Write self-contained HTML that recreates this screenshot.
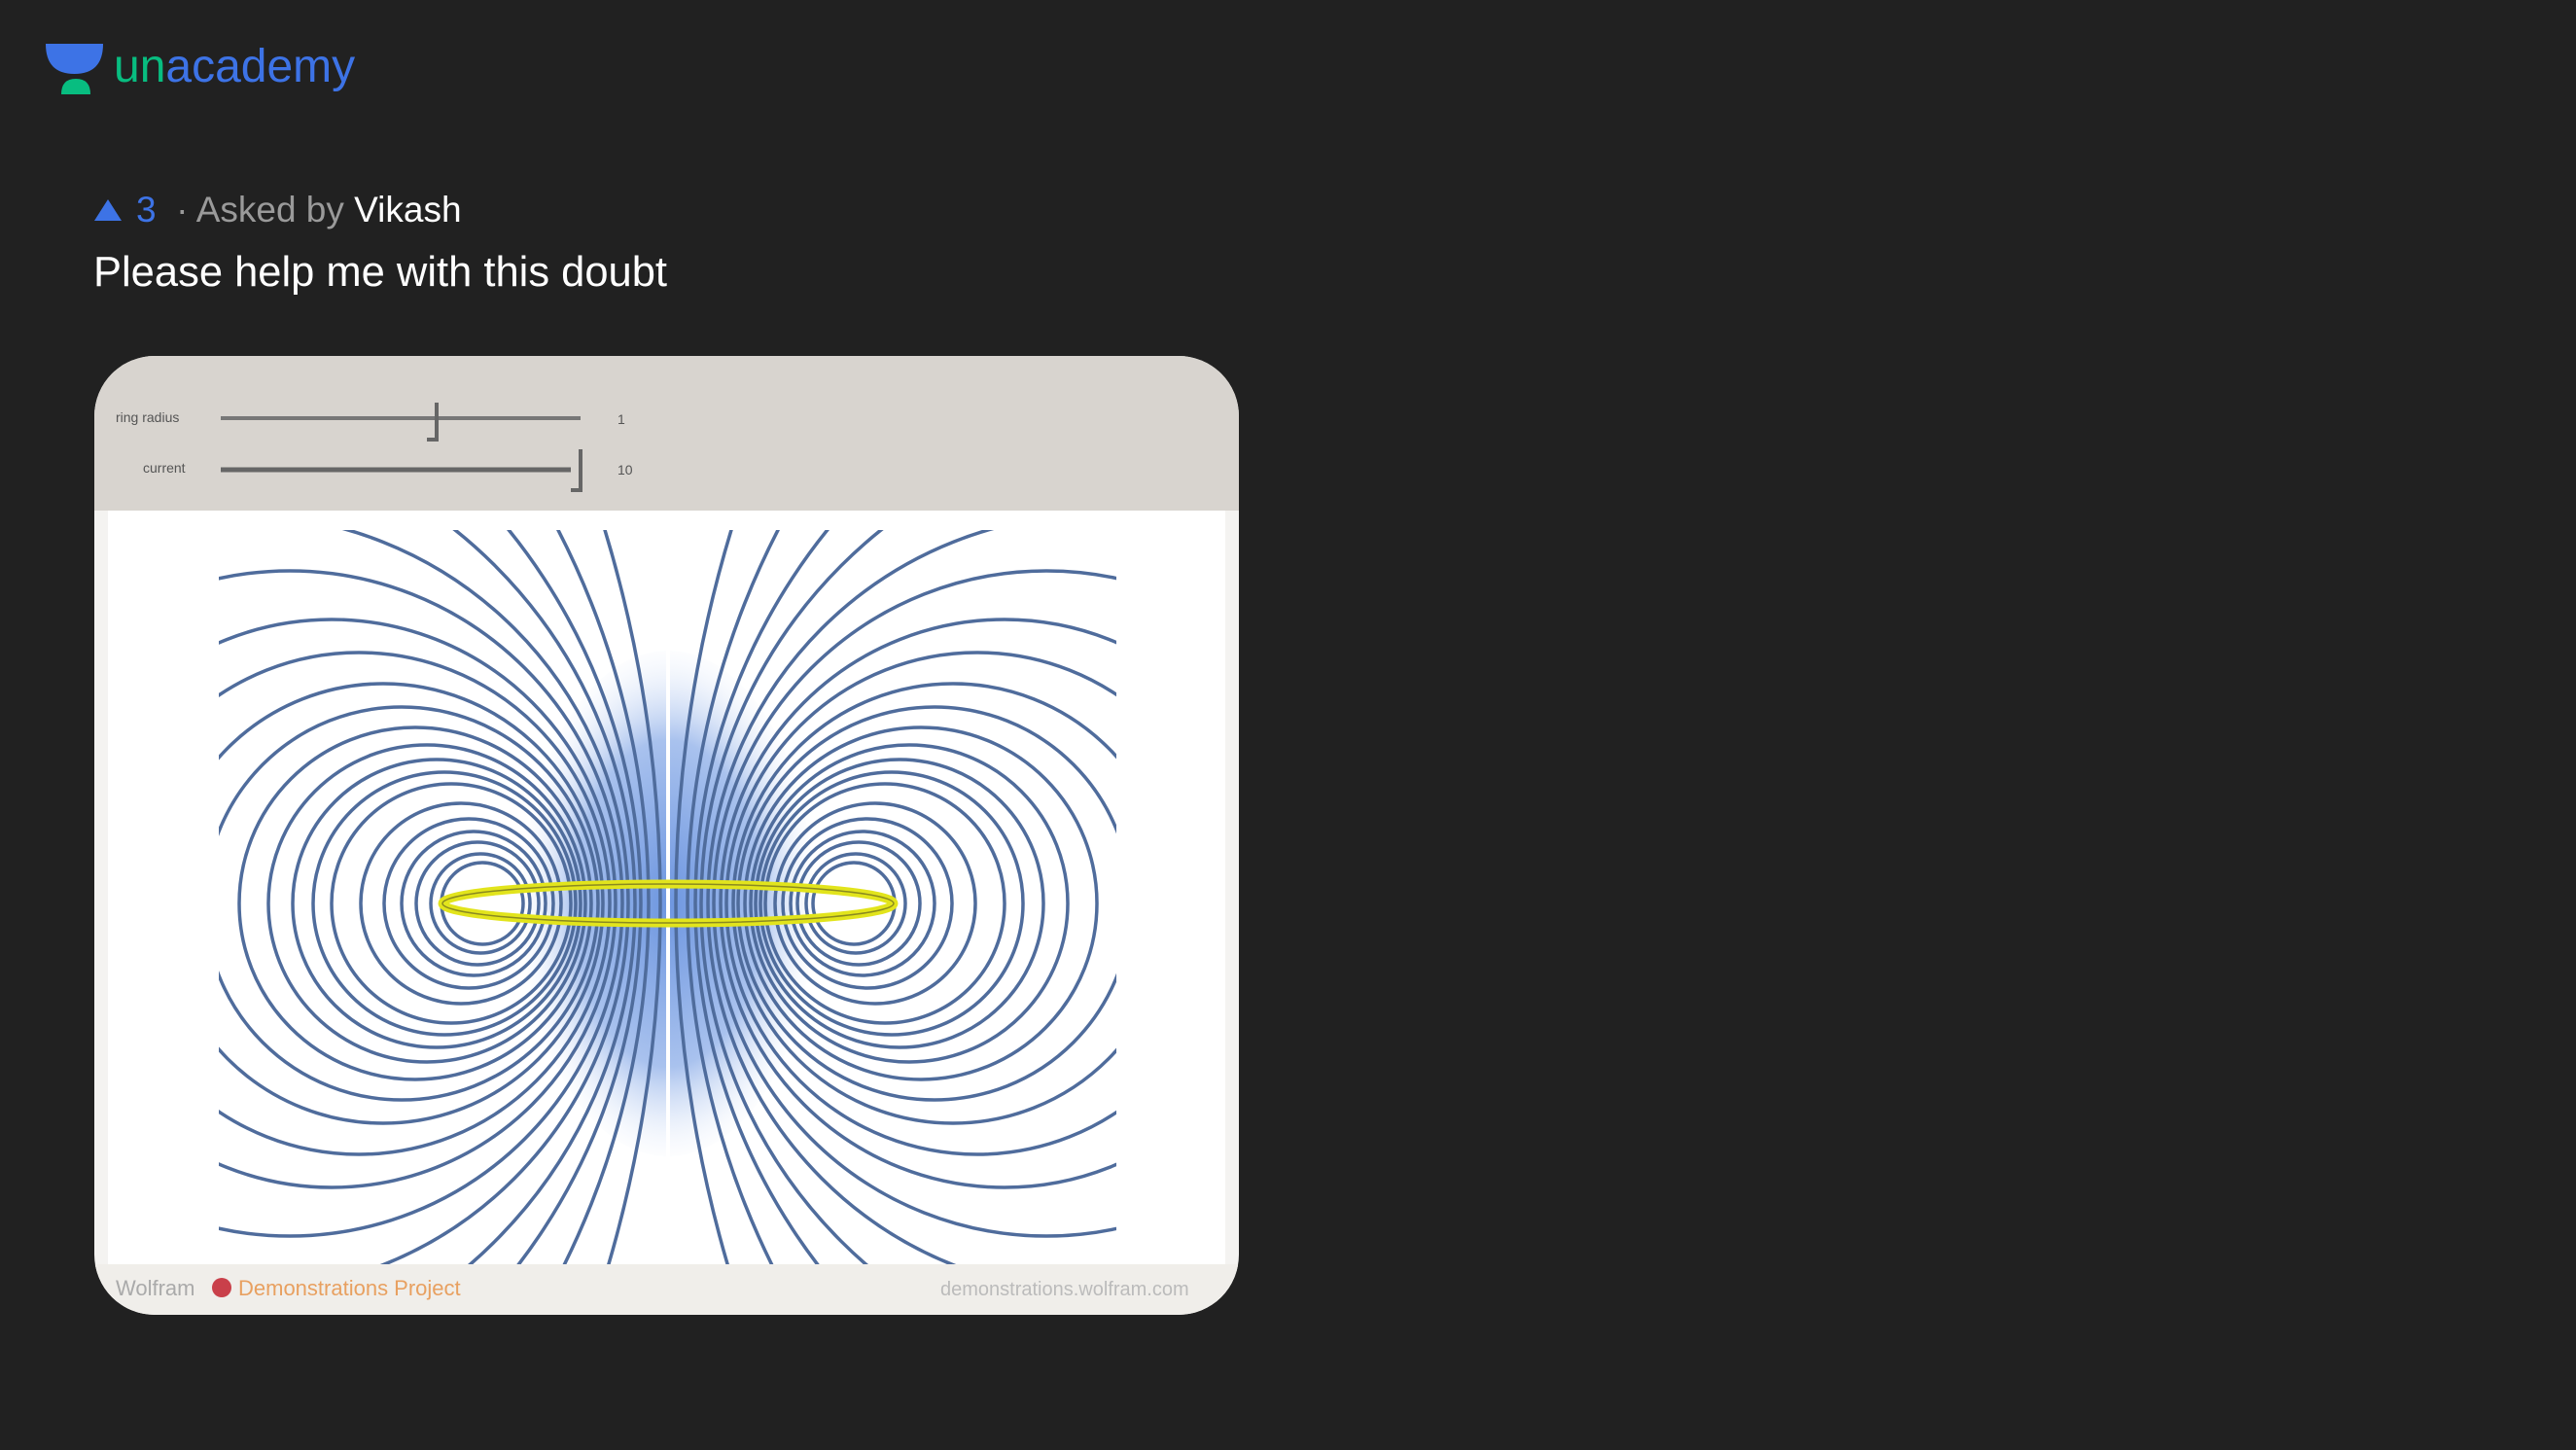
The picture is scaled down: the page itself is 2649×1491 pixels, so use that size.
<!DOCTYPE html>
<html><head><meta charset="utf-8"><style>
html,body{margin:0;padding:0;background:#212121;width:2649px;height:1491px;overflow:hidden;font-family:"Liberation Sans",sans-serif;}
.logo{position:absolute;left:117px;top:45px;font-size:48px;line-height:1;letter-spacing:0px}
.meta{position:absolute;left:96px;top:197px;font-size:37px;color:#9a9a9a;line-height:1}
.q{position:absolute;left:96px;top:259px;font-size:43.5px;color:#fff;line-height:1}
.card{position:absolute;left:97px;top:366px;width:1177px;height:986px;border-radius:62px;overflow:hidden;background:#f4f3f1}
</style></head><body>
<svg style="position:absolute;left:0;top:0" width="140" height="110">
<path d="M47 45 H106 Q106 76 76.5 76 Q47 76 47 45Z" fill="#3d73e6"/>
<path d="M63 97 Q63 81 78 81 Q93 81 93 97Z" fill="#08bd80"/>
</svg>
<div class="logo"><span style="color:#08bd80">un</span><span style="color:#3d73e6">academy</span></div>
<div class="meta"><svg width="30" height="26" style="vertical-align:-1px;margin-right:14px"><path d="M15 2 L29 24 H1Z" fill="#3d73e6"/></svg><span style="color:#3d73e6">3</span>&nbsp; · Asked by <span style="color:#fff">Vikash</span></div>
<div class="q">Please help me with this doubt</div>
<div class="card">
<svg width="1177" height="986" style="position:absolute;left:0;top:0">
<defs>
<clipPath id="c"><rect x="128" y="179" width="923" height="755"/></clipPath>
<radialGradient id="g" cx="590" cy="563" r="200" gradientUnits="userSpaceOnUse" gradientTransform="translate(590 563) scale(0.8 1.4) translate(-590 -563)">
<stop offset="0" stop-color="#6d96e0"/><stop offset="0.6" stop-color="#a9c2ee"/><stop offset="1" stop-color="#fff" stop-opacity="0"/></radialGradient>
</defs>
<rect x="0" y="0" width="1177" height="159" fill="#d8d4cf"/>
<rect x="14" y="159" width="1149" height="775" fill="#fff"/>
<rect x="0" y="934" width="1177" height="52" fill="#f0eeea"/>
<text x="22" y="68" font-size="14" fill="#555">ring radius</text>
<line x1="130" y1="64" x2="500" y2="64" stroke="#777" stroke-width="4"/>
<path d="M352 48 V86 H342" stroke="#666" stroke-width="4" fill="none"/>
<text x="538" y="70" font-size="14" fill="#555">1</text>
<text x="50" y="120" font-size="14" fill="#555">current</text>
<line x1="130" y1="117" x2="490" y2="117" stroke="#666" stroke-width="5"/>
<path d="M500 96 V138 H490" stroke="#666" stroke-width="4" fill="none"/>
<text x="538" y="122" font-size="14" fill="#555">10</text>
<ellipse cx="590" cy="563" rx="150" ry="260" fill="url(#g)" clip-path="url(#c)"/>
<g clip-path="url(#c)" fill="none" stroke="#4f6c9c" stroke-width="3.5">
<g transform="translate(590 563)">
<circle cx="1330" r="1322"/><circle cx="859" r="839"/><circle cx="639" r="611"/><circle cx="525" r="491"/><circle cx="441" r="400"/><circle cx="389" r="342"/><circle cx="346" r="292"/><circle cx="318" r="258"/><circle cx="293" r="226"/><circle cx="274" r="202"/><circle cx="260" r="181"/><circle cx="248" r="163"/><circle cx="238" r="148"/><circle cx="230" r="135"/><circle cx="223" r="123"/><circle cx="213" r="103"/><circle cx="205" r="87"/><circle cx="200" r="74"/><circle cx="196" r="63"/><circle cx="193" r="51"/><circle cx="191" r="42"/>
</g>
<g transform="translate(590 563) scale(-1 1)">
<circle cx="1330" r="1322"/><circle cx="859" r="839"/><circle cx="639" r="611"/><circle cx="525" r="491"/><circle cx="441" r="400"/><circle cx="389" r="342"/><circle cx="346" r="292"/><circle cx="318" r="258"/><circle cx="293" r="226"/><circle cx="274" r="202"/><circle cx="260" r="181"/><circle cx="248" r="163"/><circle cx="238" r="148"/><circle cx="230" r="135"/><circle cx="223" r="123"/><circle cx="213" r="103"/><circle cx="205" r="87"/><circle cx="200" r="74"/><circle cx="196" r="63"/><circle cx="193" r="51"/><circle cx="191" r="42"/>
</g>
</g>
<line x1="590" y1="179" x2="590" y2="934" stroke="#fff" stroke-width="4"/>
<ellipse cx="590" cy="563" rx="232" ry="20" fill="none" stroke="#e2e41c" stroke-width="9"/>
<ellipse cx="590" cy="563" rx="232" ry="20" fill="none" stroke="#8a8a20" stroke-width="1.5"/>
<circle cx="131" cy="958" r="10" fill="#c9404a"/>
<text x="22" y="966" font-size="22" fill="#aaa">Wolfram</text>
<text x="148" y="966" font-size="22" fill="#e8a060">Demonstrations Project</text>
<text x="870" y="966" font-size="20" fill="#bbb">demonstrations.wolfram.com</text>
</svg>
</div>
</body></html>
